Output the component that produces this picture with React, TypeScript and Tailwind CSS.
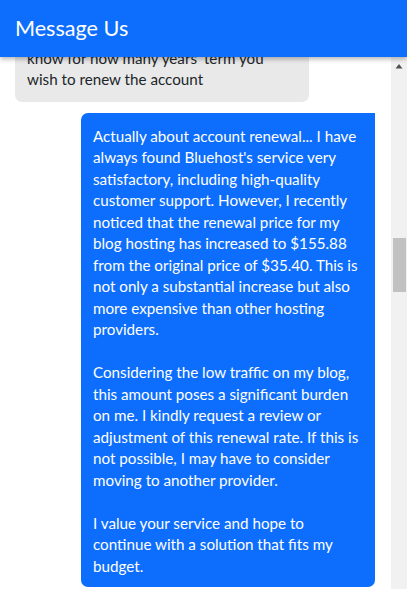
export default function App() {
  return (
    <div className="flex h-[589px] w-[407px] flex-col overflow-hidden bg-white font-['Lato',sans-serif]">
      <header className="relative z-10 flex h-[57px] shrink-0 items-center bg-[#0d6efd] px-[15px] text-[21.6px] text-white shadow-[0_2px_5px_rgba(0,0,0,0.3)]">
        Message Us
      </header>

      <div className="flex min-h-0 flex-1">
        <div className="min-w-0 flex-1 overflow-hidden">
          <div className="-mt-[44px] flex flex-col gap-[11px] pl-[15px] pr-[16px] text-[15.2px] leading-[21.5px]">
            <div className="w-[294px] self-start rounded-[7px] bg-[#e9e9e9] px-3 pt-[13px] pb-[11px] text-[#212529]">
              Sure, I'd be glad to help. Please let me know for how many years' term you wish to renew the account
            </div>

            <div className="w-[294px] self-end space-y-[21.5px] rounded-[7px] rounded-tr-none bg-[#0d6efd] px-3 pt-[13px] pb-[10px] text-white">
              <p>
                Actually about account renewal... I have always found Bluehost's service very satisfactory,
                including high-quality customer support. However, I recently noticed that the renewal price for
                my blog hosting has increased to $155.88 from the original price of $35.40. This is not only a
                substantial increase but also more expensive than other hosting providers.
              </p>
              <p>
                Considering the low traffic on my blog, this amount poses a significant burden on me. I kindly
                request a review or adjustment of this renewal rate. If this is not possible, I may have to
                consider moving to another provider.
              </p>
              <p>I value your service and hope to continue with a solution that fits my budget.</p>
            </div>
          </div>
        </div>

        {/* scrollbar */}
        <div className="relative w-[16px] shrink-0 bg-[#f1f1f1]">
          <svg width="16" height="16" viewBox="0 0 16 16" className="block">
            <polygon points="4.5,11.5 11.5,11.5 8,7" fill="#505050" />
          </svg>
          <div className="absolute left-[2px] top-[181px] h-[54px] w-[13px] bg-[#c1c1c1]" />
        </div>
      </div>
    </div>
  );
}
